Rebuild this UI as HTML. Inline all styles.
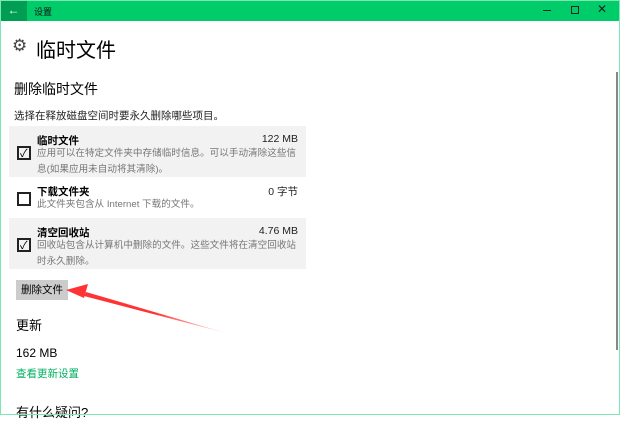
<!DOCTYPE html>
<html><head><meta charset="utf-8"><style>
*{margin:0;padding:0;box-sizing:border-box}
body{width:620px;height:415px;overflow:hidden;background:#fff;font-family:"Liberation Sans","Noto Sans CJK SC",sans-serif;color:#000;position:relative}
.frame{position:absolute;inset:0;border:1px solid #7ee6b4;pointer-events:none}
.tb{position:absolute;left:0;top:0;width:620px;height:21px;background:#00cc6a}
.back{position:absolute;left:0;top:0;width:27px;height:21px;background:#009e52;color:#fff;font-size:12px;text-align:center;line-height:20px}
.abs{position:absolute;white-space:nowrap}
.box{position:absolute;left:9px;width:297px}
.g{background:#f2f2f2}
.cb{position:absolute;left:8px;width:14px;height:14px;border:2px solid #222}
.name{position:absolute;left:28px;font-size:10.5px;font-weight:bold}
.sz{position:absolute;right:8px;font-size:10.5px;color:#222}
.desc{position:absolute;left:28px;font-size:9.6px;color:#777;line-height:16px;white-space:nowrap}
</style></head><body>
<div class="tb"></div>
<div class="back">←</div>
<div class="abs" style="left:34px;top:5px;font-size:9px;color:#111">设置</div>
<div class="abs" style="left:543px;top:10px;width:8px;height:1px;background:#222"></div>
<div class="abs" style="left:571px;top:6px;width:8px;height:8px;border:1px solid #222"></div>
<div class="abs" style="left:597px;top:2px;font-size:12px;color:#222">✕</div>
<div class="abs" style="left:12px;top:36px;font-size:17px;color:#444">⚙</div>
<div class="abs" style="left:36px;top:34px;font-size:20px">临时文件</div>
<div class="abs" style="left:14px;top:79px;font-size:14px">删除临时文件</div>
<div class="abs" style="left:14px;top:108px;font-size:10.5px;color:#222">选择在释放磁盘空间时要永久删除哪些项目。</div>
<div class="box g" style="top:126px;height:51px">
<div class="cb" style="top:20px"><span style="position:absolute;left:1px;top:-3px;font-size:11px">✓</span></div>
<div class="name" style="top:7px">临时文件</div><div class="sz" style="top:7px">122 MB</div>
<div class="desc" style="top:20px">应用可以在特定文件夹中存储临时信息。可以手动清除这些信<br>息(如果应用未自动将其清除)。</div></div>
<div class="box" style="top:177px;height:41px">
<div class="cb" style="top:15px"></div>
<div class="name" style="top:7px">下载文件夹</div><div class="sz" style="top:7px">0 字节</div>
<div class="desc" style="top:20px">此文件夹包含从 Internet 下载的文件。</div></div>
<div class="box g" style="top:218px;height:51px">
<div class="cb" style="top:20px"><span style="position:absolute;left:1px;top:-3px;font-size:11px">✓</span></div>
<div class="name" style="top:7px">清空回收站</div><div class="sz" style="top:7px">4.76 MB</div>
<div class="desc" style="top:20px">回收站包含从计算机中删除的文件。这些文件将在清空回收站<br>时永久删除。</div></div>
<div class="abs" style="left:16px;top:280px;width:52px;height:20px;background:#ccc;font-size:10.5px;line-height:20px;text-align:center">删除文件</div>
<svg class="abs" style="left:0;top:0" width="620" height="415"><defs><linearGradient id="a" x1="1" y1="1" x2="0" y2="0"><stop offset="0" stop-color="#ff3030" stop-opacity="0.1"/><stop offset="0.5" stop-color="#f33"/></linearGradient></defs>
<polygon points="226,333 86,292 84,296" fill="url(#a)"/><polygon points="66,290 88,284 84,298" fill="#f33"/></svg>
<div class="abs" style="left:16px;top:315px;font-size:13px">更新</div>
<div class="abs" style="left:16px;top:346px;font-size:12px">162 MB</div>
<div class="abs" style="left:16px;top:366px;font-size:10.5px;color:#00b060">查看更新设置</div>
<div class="abs" style="left:16px;top:402px;font-size:13px">有什么疑问?</div>
<div class="abs" style="left:616px;top:72px;width:2px;height:278px;background:#888"></div>
<div class="frame"></div>
</body></html>
